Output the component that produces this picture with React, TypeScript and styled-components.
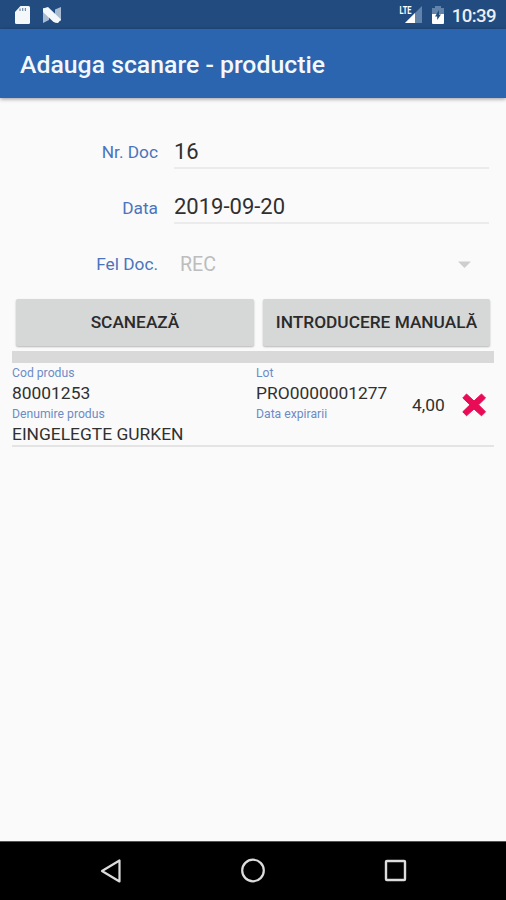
import React from 'react';
import styled, { createGlobalStyle } from 'styled-components';

const GlobalStyle = createGlobalStyle`
  * { box-sizing: border-box; }
  body { margin: 0; background: #fafafa; font-family: Roboto, sans-serif; }
`;

const Screen = styled.div`
  width: 506px;
  height: 900px;
  display: flex;
  flex-direction: column;
  overflow: hidden;
  background: #fafafa;
  color: #2b2b2b;
`;

const StatusBar = styled.header`
  flex: none;
  height: 29px;
  display: flex;
  align-items: center;
  justify-content: space-between;
  padding: 0 10px 0 14px;
  background: #224c7f;
`;

const StatusGroup = styled.div<{ $gap: number }>`
  display: flex;
  align-items: center;
  gap: ${(p) => p.$gap}px;
  height: 29px;
  svg { display: block; }
`;

const Clock = styled.span`
  font-size: 18.6px;
  font-weight: 500;
  line-height: 29px;
  padding-top: 3px;
  margin-left: -1px;
  letter-spacing: -0.6px;
  color: #e9eff6;
`;

const AppBar = styled.div`
  flex: none;
  height: 69px;
  display: flex;
  align-items: center;
  padding: 3px 20px 0;
  background: #2b65af;
  box-shadow: 0 1px 4px rgba(0, 0, 0, 0.4);
`;

const Title = styled.h1`
  margin: 0;
  font-size: 24.8px;
  font-weight: 500;
  line-height: 32px;
  white-space: nowrap;
  color: #f4f8fd;
`;

const Content = styled.main`
  flex: 1;
  display: flex;
  flex-direction: column;
  padding: 36px 12px 0;
`;

const Form = styled.div`
  display: grid;
  grid-template-columns: 146px 315px;
  grid-template-rows: 35px 35px 35px;
  column-gap: 16px;
  row-gap: 20px;
`;

const Label = styled.label<{ $line?: number }>`
  font-size: 17.3px;
  line-height: ${(p) => p.$line ?? 37}px;
  text-align: right;
  white-space: nowrap;
  color: #4a74bd;
`;

const Value = styled.div`
  height: 35px;
  border-bottom: 2px solid #ebebeb;
  font-size: 22px;
  line-height: 36px;
  color: #303030;
`;

const Select = styled.div`
  height: 39px;
  display: flex;
  align-items: center;
  justify-content: space-between;
  padding: 2px 18px 0 6px;
  font-size: 19.6px;
  line-height: 37px;
  color: #bdbdbd;
`;

const Buttons = styled.div`
  display: flex;
  gap: 9px;
  margin: 20px 4px 0;
`;

const Button = styled.button<{ $width: number }>`
  width: ${(p) => p.$width}px;
  height: 47px;
  padding: 0 0 1px;
  border: 0;
  border-radius: 2px;
  background: #d6d7d7;
  box-shadow: 0 1px 2px rgba(0, 0, 0, 0.28);
  font: 500 17.3px/46px Roboto, sans-serif;
  white-space: nowrap;
  color: #2b2b2b;
`;

const Divider = styled.div`
  height: 12px;
  margin-top: 5px;
  background: #d9d9d9;
`;

const Item = styled.article`
  height: 84px;
  display: grid;
  grid-template-columns: 244px 156px 38px 44px;
  border-bottom: 2px solid #e4e4e4;
`;

const Cell = styled.div`
  display: flex;
  flex-direction: column;
`;

const Caption = styled.span`
  font-size: 12.2px;
  line-height: 20px;
  height: 20px;
  white-space: nowrap;
  color: #6c8cc6;
`;

const Text = styled.span`
  font-size: 17.4px;
  line-height: 21px;
  height: 21px;
  white-space: nowrap;
  color: #303030;
`;

const Quantity = styled.span`
  font-size: 17.4px;
  line-height: 84px;
  color: #303030;
`;

const Remove = styled.button`
  width: 26px;
  height: 26px;
  margin: 29px 0 0 11px;
  padding: 0;
  border: 0;
  background: none;
  svg { display: block; }
`;

const NavBar = styled.nav`
  flex: none;
  height: 59px;
  display: flex;
  align-items: center;
  justify-content: space-between;
  padding: 0 98px;
  background: #000;
  border-top: 1px solid #555;
  svg { display: block; }
`;

const SdIcon = () => (
  <svg width="17" height="20" viewBox="0 0 17 20">
    <path d="M6.5 1H14.5Q16 1 16 2.5V17.5Q16 19 14.5 19H2.5Q1 19 1 17.5V7Z" fill="#f5f8fb" />
    <path d="M6 3.5V6M8.7 3V6M11.4 3V6" stroke="#7189a8" strokeWidth="1.2" />
  </svg>
);

const NougatIcon = () => (
  <svg width="20" height="18" viewBox="0 0 20 18">
    <path d="M1 2 7 5V14L1 17Z" fill="#a9bbd1" />
    <path d="M13 3.5 19 1V15L13 12Z" fill="#a9bbd1" />
    <path d="M1 2.500 6 1 19 13.500 16 17Q13 17 11 15.500L1 6Z" fill="#f5f8fb" />
  </svg>
);

const SignalIcon = () => (
  <svg width="24" height="20" viewBox="0 0 24 20">
    <path d="M23 1V18H6Z" fill="#6384aa" />
    <path d="M16 8V18H6Z" fill="#fff" />
    <text x="0.500" y="9" fontFamily="Roboto" fontSize="10" fontWeight="700" fill="#fff" textLength="12" lengthAdjust="spacingAndGlyphs">LTE</text>
  </svg>
);

const BatteryIcon = () => (
  <svg width="12" height="18" viewBox="0 0 12 18">
    <path d="M0 2H3V0H9V2H12V8H0Z" fill="#6384aa" />
    <path d="M0 8H12V17Q12 18 11 18H1Q0 18 0 17Z" fill="#fff" />
    <path d="M7 4 3 10.500H5.200V14L9 8.500H7Z" fill="#224c7f" />
  </svg>
);

const CloseIcon = () => (
  <svg width="26" height="26" viewBox="0 0 26 26">
    <path
      d="M5.500 2 13 9 20.500 2 24.500 6 17.500 12.800 24.500 19.800 20.500 23.800 13 17 5.500 23.800 1.800 19.800 9 12.800 1.800 6Z"
      fill="#e90b56"
      stroke="#e90b56"
      strokeWidth="1"
      strokeLinejoin="round"
    />
  </svg>
);

export default function App() {
  return (
    <Screen>
      <GlobalStyle />
      <StatusBar>
        <StatusGroup $gap={11}>
          <SdIcon />
          <NougatIcon />
        </StatusGroup>
        <StatusGroup $gap={9}>
          <SignalIcon />
          <BatteryIcon />
          <Clock>10:39</Clock>
        </StatusGroup>
      </StatusBar>
      <AppBar>
        <Title>Adauga scanare - productie</Title>
      </AppBar>
      <Content>
        <Form>
          <Label>Nr. Doc</Label>
          <Value>16</Value>
          <Label $line={38}>Data</Label>
          <Value>2019-09-20</Value>
          <Label $line={41}>Fel Doc.</Label>
          <Select>
            REC
            <svg width="14" height="8" viewBox="0 0 14 8">
              <path d="M1 0.500H14L7.500 7Z" fill="#cecece" />
            </svg>
          </Select>
        </Form>
        <Buttons>
          <Button $width={238}>SCANEAZĂ</Button>
          <Button $width={227}>INTRODUCERE MANUALĂ</Button>
        </Buttons>
        <Divider />
        <Item>
          <Cell>
            <Caption>Cod produs</Caption>
            <Text>80001253</Text>
            <Caption>Denumire produs</Caption>
            <Text>EINGELEGTE GURKEN</Text>
          </Cell>
          <Cell>
            <Caption>Lot</Caption>
            <Text>PRO0000001277</Text>
            <Caption>Data expirarii</Caption>
          </Cell>
          <Quantity>4,00</Quantity>
          <Remove aria-label="Sterge">
            <CloseIcon />
          </Remove>
        </Item>
      </Content>
      <NavBar>
        <svg width="26" height="26" viewBox="0 0 26 26">
          <path d="M21.500 2.500V23.500L4 13Z" fill="none" stroke="#dcdcdc" strokeWidth="2.200" strokeLinejoin="round" />
        </svg>
        <svg width="26" height="26" viewBox="0 0 26 26">
          <circle cx="13" cy="12.500" r="10.800" fill="none" stroke="#dcdcdc" strokeWidth="2.200" />
        </svg>
        <svg width="26" height="26" viewBox="0 0 26 26">
          <rect x="4" y="3" width="19" height="19" rx="0.800" fill="none" stroke="#dcdcdc" strokeWidth="2.400" />
        </svg>
      </NavBar>
    </Screen>
  );
}
